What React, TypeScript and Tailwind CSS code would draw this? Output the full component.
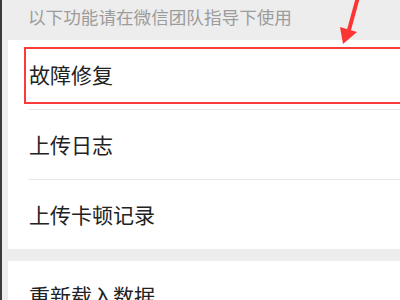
import React from "react";

const rows = ["故障修复", "上传日志", "上传卡顿记录"];

export default function App() {
  return (
    <div
      className="relative flex h-[300px] w-[400px] overflow-hidden bg-[#ededed]"
      style={{ fontFamily: '"Noto Sans CJK SC", "Noto Sans", sans-serif' }}
    >
      <div className="w-[2px] shrink-0 bg-[#3b3b3b]" />
      <div className="flex flex-1 flex-col">
        <div className="flex h-[40px] shrink-0 items-center pb-[5px] pl-[26px] text-[17.6px] text-[#9c9c9c]">
          以下功能请在微信团队指导下使用
        </div>
        <div className="ml-[6px] bg-white">
          {rows.map((label, i) => (
            <div key={label} className="relative">
              <div className="flex h-[69px] items-center pl-[21px] text-[21px] text-[#222222]">
                {label}
              </div>
              {i < rows.length - 1 && <div className="ml-[20px] h-px bg-[#e8e8e8]" />}
              {i === 0 && (
                <div className="pointer-events-none absolute left-[16px] right-[-10px] top-[7px] h-[57px] border-2 border-[#fb3a3a]" />
              )}
            </div>
          ))}
        </div>
        <div className="h-[12px] shrink-0" />
        <div className="ml-[6px] flex h-[70px] shrink-0 items-center bg-white pl-[21px] text-[21px] text-[#222222]">
          重新载入数据
        </div>
      </div>
      <svg
        className="pointer-events-none absolute left-0 top-0"
        width="400"
        height="300"
        viewBox="0 0 400 300"
      >
        <line x1="358" y1="-3" x2="349" y2="30" stroke="#fb3434" strokeWidth="4" />
        <polygon points="343,44 340,27 357,32" fill="#fb3434" />
      </svg>
    </div>
  );
}
